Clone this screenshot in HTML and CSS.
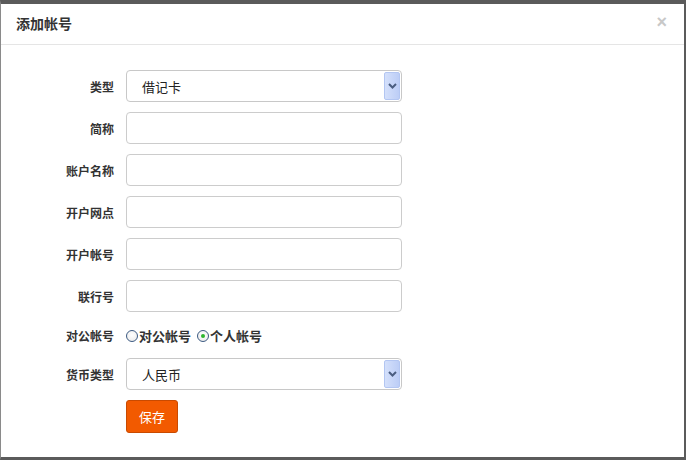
FILE: index.html
```html
<!DOCTYPE html>
<html lang="zh">
<head>
<meta charset="utf-8">
<title>添加帐号</title>
<link rel="stylesheet" href="styles.css">
</head>
<body>
<div class="modal">
  <div class="modal-header">
    <h3 class="modal-title">添加帐号</h3>
    <span class="close">×</span>
  </div>
  <div class="modal-body">
    <div class="form">
      <label class="lbl">类型</label>
      <div class="select"><span class="select-text">借记卡</span><span class="select-arrow"><svg width="9" height="6" viewBox="0 0 9 6"><path d="M1 1 L4.5 4.5 L8 1" fill="none" stroke="#4a5d80" stroke-width="2"/></svg></span></div>

      <label class="lbl">简称</label>
      <div class="input"></div>

      <label class="lbl">账户名称</label>
      <div class="input"></div>

      <label class="lbl">开户网点</label>
      <div class="input"></div>

      <label class="lbl">开户帐号</label>
      <div class="input"></div>

      <label class="lbl">联行号</label>
      <div class="input"></div>

      <label class="lbl lbl-radio">对公帐号</label>
      <div class="radios">
        <span class="radio"></span><span class="radio-text">对公帐号</span>
        <span class="radio checked"></span><span class="radio-text">个人帐号</span>
      </div>

      <label class="lbl">货币类型</label>
      <div class="select"><span class="select-text">人民币</span><span class="select-arrow"><svg width="9" height="6" viewBox="0 0 9 6"><path d="M1 1 L4.5 4.5 L8 1" fill="none" stroke="#4a5d80" stroke-width="2"/></svg></span></div>

      <span></span>
      <div class="actions"><button class="btn">保存</button></div>
    </div>
  </div>
</div>
</body>
</html>
```
FILE: styles.css
```css
html, body {
  margin: 0;
  padding: 0;
  background: #ffffff;
}
body {
  font-family: "Liberation Sans", "Noto Sans CJK SC", sans-serif;
  color: #333;
}
.modal {
  box-sizing: border-box;
  width: 686px;
  height: 460px;
  border-top: 4px solid #5b5b5b;
  border-left: 1px solid #8a8a8a;
  border-right: 2px solid #5b5b5b;
  border-bottom: 3px solid #5b5b5b;
  background: #fff;
}
.modal-header {
  height: 40px;
  border-bottom: 1px solid #e5e5e5;
  display: flex;
  align-items: center;
  justify-content: space-between;
  padding: 0 15px 0 15px;
}
.modal-title {
  margin: 0;
  font-size: 14px;
  font-weight: bold;
  color: #333;
  font-family: "Noto Sans CJK SC", sans-serif;
  line-height: 20px;
  padding-bottom: 2px;
}
.close {
  font-size: 18px;
  font-weight: bold;
  color: #c8c8c8;
  line-height: 20px;
  margin-top: -4px;
  margin-right: 2px;
}
.modal-body {
  padding: 25px 0 0 0;
}
.form {
  display: grid;
  grid-template-columns: 113px 276px;
  column-gap: 12px;
  row-gap: 10px;
  align-items: center;
}
.lbl {
  text-align: right;
  font-size: 12px;
  font-weight: bold;
  color: #333;
  font-family: "Noto Sans CJK SC", sans-serif;
}
.input, .select {
  box-sizing: border-box;
  height: 32px;
  border: 1px solid #cccccc;
  border-radius: 4px;
  background: #fff;
}
.select {
  display: flex;
  align-items: stretch;
  padding: 1px;
  border-color: #c8c8c8;
}
.select-text {
  flex: 1;
  display: flex;
  align-items: center;
  padding-left: 14px;
  font-size: 13px;
  color: #222;
  font-family: "Noto Sans CJK SC", sans-serif;
}
.select-arrow {
  width: 14px;
  display: flex;
  align-items: center;
  justify-content: center;
  border: 1px solid #b3c6f2;
  border-radius: 2px;
  background: linear-gradient(to right, #d4e0fb, #bccdf6);
}
.radios {
  display: flex;
  align-items: center;
  height: 26px;
  padding-top: 1px;
  box-sizing: border-box;
}
.radio {
  box-sizing: border-box;
  width: 12px;
  height: 12px;
  border-radius: 50%;
  border: 1px solid #3c5a82;
  background: radial-gradient(circle at 50% 40%, #ffffff 0%, #e8e8e8 100%);
  display: inline-flex;
  align-items: center;
  justify-content: center;
}
.radio.checked::after {
  content: "";
  width: 4px;
  height: 4px;
  border-radius: 50%;
  background: #2fb52f;
}
.radio-text {
  font-size: 13px;
  font-weight: bold;
  color: #333;
  margin-left: 1px;
  margin-right: 6px;
  font-family: "Noto Sans CJK SC", sans-serif;
}
.actions {
  display: flex;
}
.btn {
  box-sizing: border-box;
  width: 52px;
  height: 33px;
  background: #f25a00;
  border: 1px solid #c94a00;
  border-radius: 3px;
  color: #fff;
  font-size: 13px;
  font-family: "Noto Sans CJK SC", sans-serif;
  padding: 0;
}
```
